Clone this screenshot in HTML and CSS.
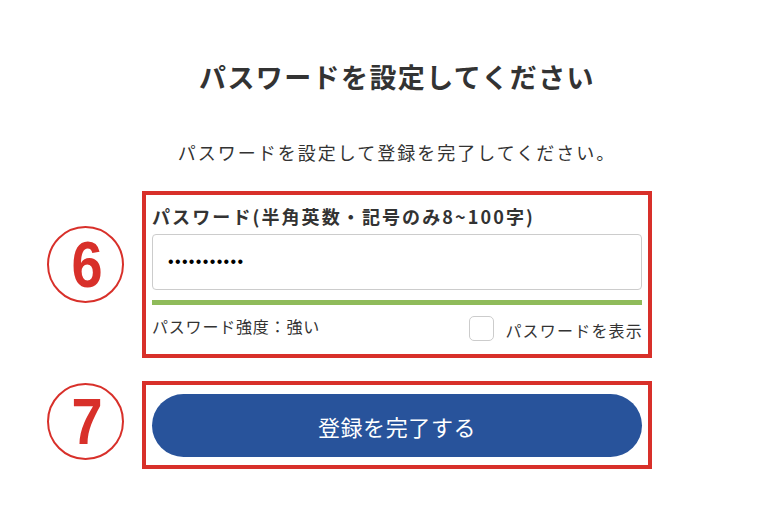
FILE: index.html
```html
<!DOCTYPE html>
<html lang="ja">
<head>
<meta charset="utf-8">
<title>パスワードを設定してください</title>
<link rel="stylesheet" href="styles.css">
</head>
<body>
<main class="layout">
  <h1 class="title">パスワードを設定してください</h1>
  <p class="lead">パスワードを設定して登録を完了してください。</p>

  <div class="marker marker-6"><span class="num">6</span></div>
  <section class="frame frame-pw">
    <label class="field-label" for="pw">パスワード(半角英数・記号のみ8~100字)</label>
    <input class="pw-input" id="pw" type="password" value="abcdefghijk">
    <div class="meter"></div>
    <div class="meter-row">
      <span class="strength">パスワード強度：強い</span>
      <label class="show">
        <span class="box"></span>
        <span class="show-text">パスワードを表示</span>
      </label>
    </div>
  </section>

  <div class="marker marker-7"><span class="num">7</span></div>
  <section class="frame frame-btn">
    <button class="submit" type="button">登録を完了する</button>
  </section>
</main>
</body>
</html>
```
FILE: styles.css
```css
* { box-sizing: border-box; }
html, body {
  margin: 0;
  padding: 0;
  background: #fff;
}
body {
  font-family: "Noto Sans CJK JP", "Noto Sans", sans-serif;
  color: #333;
}
.layout {
  display: grid;
  grid-template-columns: 77px 510px;
  column-gap: 18px;
  margin-left: 47px;
  padding-top: 59px;
  align-items: start;
}
.title {
  grid-column: 2;
  margin: 0;
  text-align: center;
  font-size: 27px;
  line-height: 36px;
  font-weight: bold;
  letter-spacing: 1.4px;
  color: #333;
}
.lead {
  grid-column: 2;
  margin: 43px 0 0;
  text-align: center;
  font-size: 18px;
  line-height: 28px;
  letter-spacing: 2px;
  color: #333;
}
.marker {
  grid-column: 1;
  width: 77px;
  height: 77px;
  border: 2px solid #d8302a;
  border-radius: 50%;
  display: flex;
  align-items: center;
  justify-content: center;
}
.marker-6 { margin-top: 60px; }
.marker-7 { margin-top: 25px; }
.num {
  font-family: "Liberation Sans", Arial, sans-serif;
  font-weight: bold;
  font-size: 65px;
  line-height: 1;
  color: #d8302a;
  transform: scaleX(0.86);
  margin-left: 3px;
}
.frame {
  grid-column: 2;
  border: 4px solid #d8302a;
}
.frame-pw {
  margin-top: 25px;
  padding: 9px 6px 13px;
}
.frame-btn {
  margin-top: 23px;
  padding: 9px 6px 8px;
}
.field-label {
  display: block;
  font-size: 18px;
  line-height: 24px;
  font-weight: bold;
  letter-spacing: 2.1px;
  color: #333;
  margin-bottom: 6px;
}
.pw-input {
  display: block;
  width: 100%;
  height: 56px;
  border: 1px solid #ccc;
  border-radius: 4px;
  padding: 0 15px;
  font-family: "Liberation Sans", Arial, sans-serif;
  font-size: 16px;
  letter-spacing: 1.35px;
  color: #000;
  background: #fff;
  outline: none;
}
.meter {
  height: 5px;
  margin-top: 10px;
  background: #8fbb5a;
}
.meter-row {
  display: flex;
  justify-content: space-between;
  align-items: flex-start;
  margin-top: 11px;
}
.strength {
  font-size: 16px;
  line-height: 20px;
  letter-spacing: 0.8px;
  color: #333;
}
.show {
  display: flex;
  align-items: center;
  gap: 11px;
}
.box {
  width: 25px;
  height: 25px;
  border: 1px solid #ccc;
  border-radius: 5px;
  background: #fff;
}
.show-text {
  font-size: 16px;
  line-height: 20px;
  letter-spacing: 1.2px;
  color: #333;
  padding-top: 3px;
  margin-right: -1px;
}
.submit {
  display: block;
  width: 100%;
  height: 63px;
  border: 0;
  border-radius: 32px;
  background: #28539b;
  color: #fff;
  font-family: "Noto Sans CJK JP", "Noto Sans", sans-serif;
  font-size: 22px;
  letter-spacing: 0.6px;
  cursor: pointer;
}
```
